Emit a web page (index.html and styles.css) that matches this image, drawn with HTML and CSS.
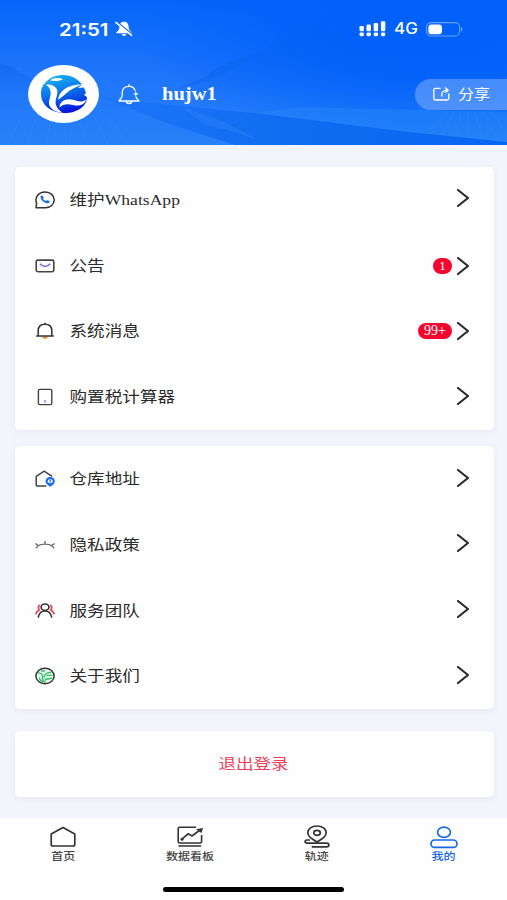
FILE: index.html
```
<!DOCTYPE html>
<html lang="zh-CN">
<head>
    <meta charset="UTF-8">
    <meta name="viewport" content="width=device-width, initial-scale=1.0">
    <title>我的</title>
    <link rel="stylesheet" href="styles.css">
</head>
<body>

    <!-- Header -->
    <header class="header">
        <svg class="header-bg" viewBox="0 0 507 145" preserveAspectRatio="none">
            <defs>
                <linearGradient id="sky" x1="0" y1="0" x2="0" y2="1">
                    <stop offset="0" stop-color="#0465fa"/>
                    <stop offset="0.5" stop-color="#1f75fb"/>
                    <stop offset="1" stop-color="#2681f8"/>
                </linearGradient>
                <radialGradient id="shade" cx="0.8" cy="0.25" r="0.75">
                    <stop offset="0" stop-color="#0060fa"/>
                    <stop offset="0.4" stop-color="#0060fa" stop-opacity="0.85"/>
                    <stop offset="1" stop-color="#0060fa" stop-opacity="0"/>
                </radialGradient>
                <linearGradient id="hill" x1="0" y1="0" x2="0" y2="1">
                    <stop offset="0" stop-color="#0560ee" stop-opacity="0.4"/>
                    <stop offset="1" stop-color="#0560ee" stop-opacity="0"/>
                </linearGradient>
                <linearGradient id="road" x1="0" y1="0" x2="1" y2="0">
                    <stop offset="0" stop-color="#1c76f6"/>
                    <stop offset="0.5" stop-color="#0f6bf0"/>
                    <stop offset="1" stop-color="#0766f3"/>
                </linearGradient>
            </defs>
            <rect width="507" height="145" fill="url(#sky)"/>
            <rect x="120" width="387" height="145" fill="url(#shade)"/>
            <path d="M0 63 L12 67 L30 78 L60 100 L0 100Z" fill="url(#hill)"/>
            <path d="M170 92 L200 79 L220 66 L237 61 L262 51 L290 30 L305 25 L325 30 L350 40 L400 60 L440 100Z" fill="url(#hill)"/>
            <path d="M178 88 L203 78 L222 65 L240 58 L257 53 L242 63 L222 75 L200 83Z" fill="#0b63ea" opacity="0.4"/>
            <path d="M100 97 L160 104 L254 113 L400 131 L507 142 L507 145 L235 145 L170 124Z" fill="url(#road)"/>
            <path d="M180 106 L225 122 L262 142 L235 132 L205 125Z" fill="#3186f8" opacity="0.35"/>
            <path d="M254 113 L300 107 L507 112 L507 142 L400 131Z" fill="#2583f8" opacity="0.5"/>
            <g stroke="#4b9bff" stroke-width="1" opacity="0.22">
                <path d="M20 118 L8 145M35 120 L27 145M50 122 L46 145M65 124 L66 145M80 122 L87 145M95 118 L108 145M108 116 L128 145"/>
                <path d="M447 112 L430 130M454 112 L442 134M461 112 L456 136M468 112 L470 138M475 112 L483 139M483 112 L497 140M491 112 L507 134"/>
            </g>
        </svg>

        <div class="status-bar">
            <span class="time">21:51</span>
            <svg class="mute" width="18" height="16" viewBox="0 0 18 16">
                <path d="M9 0.8 C5.8 0.8 4.6 3 4.4 6 C4.2 9 3 10 1.4 11.2 V12.2 H16.6 V11.2 C15 10 13.8 9 13.6 6 C13.4 3 12.2 0.8 9 0.8Z M6.8 13 C7.2 15.6 10.8 15.6 11.2 13Z" fill="#fff"/>
                <path d="M1.4 0.4 L17.2 13.4" stroke="#1a6ffb" stroke-width="1.5"/>
                <path d="M0.8 1.4 L16.6 14.4" stroke="#fff" stroke-width="1.4" stroke-linecap="round"/>
            </svg>
            <svg class="signal" width="27" height="16" viewBox="0 0 27 16" fill="#fff">
                <rect x="0.5" y="5" width="4.4" height="5.2" rx="1.2"/>
                <rect x="7.5" y="3.5" width="4.4" height="6.7" rx="1.2"/>
                <rect x="14.7" y="2" width="4.4" height="8.2" rx="1.2"/>
                <rect x="21.9" y="0.3" width="4.4" height="9.9" rx="1.2"/>
                <rect x="0.5" y="11.6" width="4.4" height="3.6" rx="1.4"/>
                <rect x="7.5" y="11.6" width="4.4" height="3.6" rx="1.4"/>
                <rect x="14.7" y="11.6" width="4.4" height="3.6" rx="1.4"/>
                <rect x="21.9" y="11.6" width="4.4" height="3.6" rx="1.4"/>
            </svg>
            <span class="network">4G</span>
            <svg class="battery" width="37" height="15" viewBox="0 0 37 15">
                <rect x="0.6" y="0.6" width="33" height="13.4" rx="4.5" fill="none" stroke="#fff" stroke-opacity="0.4" stroke-width="1.1"/>
                <rect x="2.4" y="2.4" width="13.6" height="9.8" rx="3" fill="#fff"/>
                <path d="M35 5 C36.8 5.6 36.8 9 35 9.6Z" fill="#fff" opacity="0.5"/>
            </svg>
        </div>

        <div class="user">
            <div class="avatar">
                <svg width="48" height="40" viewBox="0 0 48 40">
                    <defs>
                        <linearGradient id="logo" x1="0.3" y1="0" x2="0.6" y2="1">
                            <stop offset="0" stop-color="#14b4f4"/>
                            <stop offset="0.45" stop-color="#0b74ea"/>
                            <stop offset="1" stop-color="#0410d8"/>
                        </linearGradient>
                    </defs>
                    <path d="M6 8 C12 1 24 -1 33 3 C37 5 40 8 42 10.5 L38 14 L44 13.5 L46 19 L44 21 L47 23 C47 33 36 39 25 39 C10 39 1 30 1 20 C1 15 2 12 6 8Z" fill="url(#logo)"/>
                    <path d="M10 6.6 C13 3.6 19 3.6 23 5 C20 7 15 7.6 10 6.6Z" fill="#fff"/>
                    <path d="M5.5 10.6 C10 10 16.6 11.6 17.4 17 C17.8 22 14.4 26 16 31 C17.4 35 20 37 23 38.8 C15 38.6 8.4 34 9 28 C9.4 24 11.4 21 10.4 17 C9.6 14 8 12 5.5 10.6Z" fill="#fff"/>
                    <path d="M18.2 26 C18.4 18 26 10.6 42.4 10.2 C36 13 30 15.4 26 19.4 C23.4 22 21 23 18.2 26Z" fill="#fff"/>
                    <path d="M19.6 33.4 C19 27.4 27 23.6 34 26 C38.4 27.6 42 28.4 46 25.4 C44.6 31 39 32.6 33 31 C28 29.6 23 29.6 19.6 33.4Z" fill="#fff"/>
                </svg>
            </div>
            <svg class="bell" width="22" height="21" viewBox="0 0 22 21" fill="none" stroke="#fff" stroke-width="1.3" stroke-linejoin="round" stroke-linecap="round">
                <path d="M17 6.4 C16.2 3.6 14 2.4 11 2.4 C7 2.4 4.4 4.8 4.2 8.4 V11.8 C4.2 13.6 2.2 15 1 17 H21 C20 15.6 18.6 14.6 18 13"/>
                <path d="M11 0.7 V2.2M8.2 17.4 C8.4 20.2 13.6 20.2 13.8 17.4"/>
                <path d="M17.8 6.6 L18.6 9.2 L21.2 9.9 L18.6 10.6 L17.8 13 L17 10.6 L14.8 9.9 L17 9.2Z" fill="#fff" stroke="none"/>
            </svg>
            <span class="username">hujw1</span>
            <div class="share">
                <svg width="17" height="14" viewBox="0 0 17 14" fill="none" stroke="#fff" stroke-width="1.3" stroke-linecap="round" stroke-linejoin="round">
                    <path d="M7 1.4 H3 C1.4 1.4 0.8 2 0.8 3.2 V11 C0.8 12.4 1.6 13 3 13 H13.6 C15.2 13 15.8 12.4 15.8 11 V7"/>
                    <path d="M8.8 9 C8.6 5 10.2 3.2 14.6 3.2M12.4 0.8 L15.2 3.2 L12.4 5.4"/>
                </svg>
                <span>分享</span>
            </div>
        </div>
    </header>

    <!-- Menu -->
    <main class="content">
        <div class="card">
            <div class="row">
                <svg class="icon" viewBox="0 0 20 18" fill="none">
                    <path d="M1 16.8 L1.6 12.4 C-0.8 6.4 3.6 1 10.2 1 C15.6 1 19.2 4.6 19.2 8.8 C19.2 13.2 15.4 16.8 10.2 16.8Z" stroke="#333" stroke-width="1.5" stroke-linejoin="round"/>
                    <path d="M5.6 5 C5 8.8 9.8 13.4 14.2 12 L14.6 10 L11.8 9.2 L10.8 10 C9.4 9.6 8.4 8.6 8 7.6 L8.8 6.4 L7.2 4.4Z" fill="#1769f5"/>
                </svg>
                <span class="label">维护WhatsApp</span>
                <svg class="arrow up" viewBox="0 0 12 18"><path d="M1 1 L11 9 L1 17"/></svg>
            </div>
            <div class="row">
                <svg class="icon" viewBox="0 0 20 18" fill="none">
                    <rect x="1.2" y="3.1" width="17.6" height="11.6" rx="1.6" stroke="#444" stroke-width="1.6"/>
                    <path d="M4.8 6.8 C8 10.4 12 10.4 15.2 6.8" stroke="#7d68ee" stroke-width="1.5"/>
                </svg>
                <span class="label">公告</span>
                <span class="badge">1</span>
                <svg class="arrow" viewBox="0 0 12 18"><path d="M1 1 L11 9 L1 17"/></svg>
            </div>
            <div class="row">
                <svg class="icon" viewBox="0 0 20 18" fill="none">
                    <path d="M7.2 14.6 H12.8 C12.6 17.8 7.4 17.8 7.2 14.6Z" fill="#ff9636"/>
                    <path d="M3.2 14 V8.6 C3.2 4.8 5.6 2.2 10 2.2 C14.4 2.2 16.8 4.8 16.8 8.6 V14M1.2 14 H18.8M10 0.8 V2.2" stroke="#333" stroke-width="1.5"/>
                </svg>
                <span class="label">系统消息</span>
                <span class="badge wide">99+</span>
                <svg class="arrow" viewBox="0 0 12 18"><path d="M1 1 L11 9 L1 17"/></svg>
            </div>
            <div class="row">
                <svg class="icon" viewBox="0 0 20 18" fill="none">
                    <rect x="3.4" y="1.4" width="13.4" height="15.2" rx="1.4" stroke="#444" stroke-width="1.4"/>
                    <path d="M10.1 12.2 V14.4" stroke="#6f68f0" stroke-width="1.4"/>
                </svg>
                <span class="label">购置税计算器</span>
                <svg class="arrow up" viewBox="0 0 12 18"><path d="M1 1 L11 9 L1 17"/></svg>
            </div>
        </div>

        <div class="card">
            <div class="row">
                <svg class="icon" viewBox="0 0 20 18" fill="none">
                    <path d="M11.4 15.9 H2.4 C1.6 15.9 1.2 15.5 1.2 14.7 V6.4 L9.2 1.2 L17 6.4" stroke="#444" stroke-width="1.5" stroke-linejoin="round"/>
                    <path d="M15.2 7 C12.4 7 10.6 9 10.6 11.2 C10.6 13.4 12.6 15.2 15.2 16.8 C17.8 15.2 19.8 13.4 19.8 11.2 C19.8 9 18 7 15.2 7Z" fill="#1769f5"/>
                    <ellipse cx="15.2" cy="11.2" rx="2.5" ry="2" fill="#fff"/>
                    <path d="M15.2 10 V12.4" stroke="#1769f5" stroke-width="1.3"/>
                </svg>
                <span class="label">仓库地址</span>
                <svg class="arrow up" viewBox="0 0 12 18"><path d="M1 1 L11 9 L1 17"/></svg>
            </div>
            <div class="row">
                <svg class="icon" viewBox="0 0 20 18" fill="none">
                    <path d="M0.6 7.4 C1.4 8.4 2.2 9 3.2 9.6 C7 7.6 13 7.6 16.8 9.6 C17.8 9 18.6 8.4 19.4 7.4M10 5 V8.2M3.2 9.6 L0.8 12.4M16.8 9.6 L19.2 12.4" stroke="#666" stroke-width="1.3"/>
                </svg>
                <span class="label">隐私政策</span>
                <svg class="arrow up" viewBox="0 0 12 18"><path d="M1 1 L11 9 L1 17"/></svg>
            </div>
            <div class="row">
                <svg class="icon" viewBox="0 0 20 18" fill="none">
                    <path d="M4.8 3 C2.8 4.4 3.2 6.8 4.2 8 C2.4 9 1.2 10.4 0.8 12.2M15.2 3 C17.2 4.4 16.8 6.8 15.8 8 C17.6 9 18.8 10.4 19.2 12.2" stroke="#f0455e" stroke-width="1.9"/>
                    <ellipse cx="10" cy="5.2" rx="3.9" ry="3.2" stroke="#333" stroke-width="1.6"/>
                    <path d="M3.2 15.6 C4 11.4 6.4 9 10 9 C13.6 9 16 11.4 16.8 15.6" stroke="#333" stroke-width="1.6"/>
                </svg>
                <span class="label">服务团队</span>
                <svg class="arrow up" viewBox="0 0 12 18"><path d="M1 1 L11 9 L1 17"/></svg>
            </div>
            <div class="row">
                <svg class="icon" viewBox="0 0 20 18" fill="none">
                    <ellipse cx="10" cy="9" rx="8" ry="6.8" fill="#e6f8ec"/>
                    <path d="M3 5.6 C6.4 6 8 8 7.6 10.6 C7.4 12.6 8.6 14.4 10.6 15.4M6 4 H10M9 10.6 C9.6 7 12.6 5 16.4 5.6M11.6 8.4 L17.4 8.4M9.8 13.4 C11.4 10.6 14.4 12.6 17 10.8M4.4 10.6 C4.6 12.6 6 14.2 8 15" stroke="#35c068" stroke-width="1.4"/>
                    <ellipse cx="10" cy="9" rx="9.1" ry="7.8" stroke="#333" stroke-width="1.5"/>
                </svg>
                <span class="label">关于我们</span>
                <svg class="arrow up" viewBox="0 0 12 18"><path d="M1 1 L11 9 L1 17"/></svg>
            </div>
        </div>

        <div class="card logout">
            <span>退出登录</span>
        </div>
    </main>

    <!-- Tab bar -->
    <footer class="footer">
        <nav class="tabs">
            <div class="tab">
                <svg width="28" height="24" viewBox="0 0 28 24" fill="none" stroke="#333" stroke-width="1.7" stroke-linejoin="round">
                    <path d="M14 2.4 L25.8 9 V19.4 C25.8 20.4 25.2 21 24 21 H4 C2.8 21 2.2 20.4 2.2 19.4 V9Z"/>
                </svg>
                <span>首页</span>
            </div>
            <div class="tab">
                <svg width="28" height="24" viewBox="0 0 28 24" fill="none" stroke="#333" stroke-width="1.6">
                    <path d="M20 2.2 H3.6 C2.6 2.2 2.2 2.6 2.2 3.4 V16.6 C2.2 17.6 2.8 18 3.6 18 H24.2 C25 18 25.6 17.6 25.6 16.6 V10"/>
                    <path d="M5.6 14.4 L12.2 8.8 L16 11 L24 5"/>
                    <path d="M20 4.2 L27 3 L25.4 8Z" fill="#333" stroke="none"/>
                    <circle cx="6" cy="14.2" r="1.5" fill="#333" stroke="none"/>
                    <path d="M2.4 21 H25.2" stroke-width="1.5"/>
                </svg>
                <span>数据看板</span>
            </div>
            <div class="tab">
                <svg width="28" height="24" viewBox="0 0 28 24" fill="none" stroke="#333" stroke-width="1.7" stroke-linecap="round">
                    <path d="M14 17 C8 13.4 4.8 11.4 4.8 7.8 C4.8 3.8 8.8 1 14 1 C19.2 1 23.2 3.8 23.2 7.8 C23.2 11.4 20 13.4 14 17Z"/>
                    <ellipse cx="14" cy="7.8" rx="3.3" ry="2.5"/>
                    <path d="M6.4 15 H4.2 C1.4 15 1.4 18.2 4.2 18.2 H23.6 C26.6 18.2 26.6 21.8 23.6 21.8 H9.4"/>
                </svg>
                <span>轨迹</span>
            </div>
            <div class="tab active">
                <svg width="28" height="24" viewBox="0 0 28 24" fill="none" stroke="#1769e8" stroke-width="1.7">
                    <ellipse cx="14" cy="7.2" rx="6.4" ry="5.1"/>
                    <rect x="1" y="15" width="26" height="7.4" rx="3.7"/>
                </svg>
                <span>我的</span>
            </div>
        </nav>
        <div class="home-indicator"></div>
    </footer>

</body>
</html>
```

FILE: styles.css
```
* {
    box-sizing: border-box;
}
body {
    margin: 0;
    height: 900px;
    display: flex;
    flex-direction: column;
    overflow: hidden;
    background-color: #f3f4fc;
    color: #2b2b2b;
    font-family: "Liberation Serif", "Noto Sans CJK SC", serif;
}
svg {
    display: block;
    flex-shrink: 0;
}
/* Header */
.header {
    position: relative;
    height: 145px;
    flex-shrink: 0;
    color: #fff;
}
.header-bg {
    position: absolute;
    top: 0;
    left: 0;
    width: 100%;
    height: 100%;
}
.status-bar {
    position: relative;
    display: flex;
    align-items: center;
    height: 58px;
    padding-left: 59px;
    padding-right: 44px;
    font-family: Inter, sans-serif;
}
.time {
    width: 52px;
    font-size: 20.5px;
    font-weight: 600;
    transform: scaleY(0.86);
}
.mute {
    margin-left: 4px;
}
.signal {
    margin-left: auto;
}
.network {
    width: 24px;
    margin-left: 8px;
    font-size: 17px;
    font-weight: 500;
    transform: scaleY(0.9);
}
.battery {
    margin-left: 8px;
}
.user {
    position: relative;
    display: flex;
    align-items: center;
    height: 72px;
    padding-left: 28px;
}
.avatar {
    display: flex;
    align-items: center;
    justify-content: center;
    width: 71px;
    height: 58px;
    border-radius: 50%;
    background-color: #fff;
}
.bell {
    margin-left: 19px;
}
.username {
    margin-left: 22px;
    font-size: 20.5px;
    font-weight: bold;
    transform: scaleY(0.9);
}
.share {
    display: flex;
    align-items: center;
    gap: 8px;
    width: 92px;
    height: 31px;
    margin-left: auto;
    padding-left: 18px;
    border-radius: 16px 0 0 16px;
    background-color: rgba(255, 255, 255, 0.25);
    font-size: 16px;
}
.share span {
    padding-bottom: 2px;
    transform: scaleY(0.86);
}
/* Cards */
.content {
    flex: 1;
    padding: 22px 13px 0 15px;
}
.card {
    margin-bottom: 16px;
    border-radius: 5px;
    background-color: #fefefe;
    box-shadow: 0 2px 8px rgba(0, 0, 0, 0.05);
}
.row {
    display: flex;
    align-items: center;
    height: 65.8px;
    padding: 0 25px 0 20px;
}
.icon {
    width: 20px;
    height: 18px;
}
.label {
    flex: 1;
    margin-left: 14.5px;
    font-size: 17.6px;
    line-height: 26px;
    transform: scaleY(0.86);
}
.badge {
    min-width: 19px;
    height: 16px;
    margin-right: 5px;
    border-radius: 8px;
    background-color: #f5062f;
    color: #fff;
    font-size: 13px;
    line-height: 16px;
    text-align: center;
}
.badge.wide {
    width: 34px;
    font-size: 14px;
}
.arrow {
    width: 12px;
    height: 18px;
    fill: none;
    stroke: #2b2b2b;
    stroke-width: 2.2;
    stroke-linecap: round;
    stroke-linejoin: round;
}
.arrow.up {
    margin-bottom: 3px;
}
.logout {
    display: flex;
    align-items: center;
    justify-content: center;
    height: 66px;
    margin-top: 22px;
    color: #f0405a;
    font-size: 17.5px;
}
.logout span {
    padding: 0 2px 3px 0;
    transform: scaleY(0.86);
}
/* Tab bar */
.footer {
    height: 82px;
    background-color: #fefefe;
}
.tabs {
    display: flex;
    height: 69px;
    padding-top: 7px;
}
.tab {
    flex: 1;
    display: flex;
    flex-direction: column;
    align-items: center;
    color: #444;
    font-size: 12px;
    font-weight: 500;
    line-height: 16px;
}
.tab span {
    transform: scaleY(0.86);
}
.tab.active {
    color: #1769e8;
}
.home-indicator {
    width: 181px;
    height: 5px;
    margin: 0 auto;
    border-radius: 3px;
    background-color: #000;
}
```
